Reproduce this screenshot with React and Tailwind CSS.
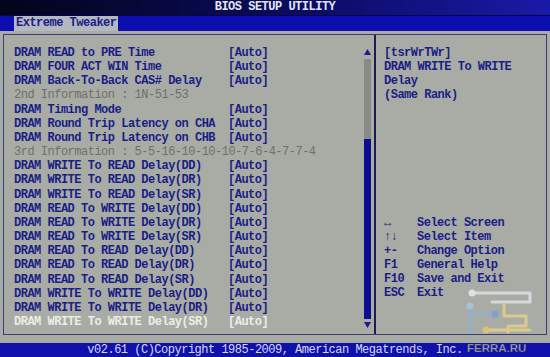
import React from 'react';

const rows = [
    { label: 'DRAM READ to PRE Time', value: '[Auto]' },
    { label: 'DRAM FOUR ACT WIN Time', value: '[Auto]' },
    { label: 'DRAM Back-To-Back CAS# Delay', value: '[Auto]' },
    { label: '2nd Information : 1N-51-53', info: true },
    { label: 'DRAM Timing Mode', value: '[Auto]' },
    { label: 'DRAM Round Trip Latency on CHA', value: '[Auto]' },
    { label: 'DRAM Round Trip Latency on CHB', value: '[Auto]' },
    { label: '3rd Information : 5-5-16-10-10-10-7-6-4-7-7-4', info: true },
    { label: 'DRAM WRITE To READ Delay(DD)', value: '[Auto]' },
    { label: 'DRAM WRITE To READ Delay(DR)', value: '[Auto]' },
    { label: 'DRAM WRITE To READ Delay(SR)', value: '[Auto]' },
    { label: 'DRAM READ To WRITE Delay(DD)', value: '[Auto]' },
    { label: 'DRAM READ To WRITE Delay(DR)', value: '[Auto]' },
    { label: 'DRAM READ To WRITE Delay(SR)', value: '[Auto]' },
    { label: 'DRAM READ To READ Delay(DD)', value: '[Auto]' },
    { label: 'DRAM READ To READ Delay(DR)', value: '[Auto]' },
    { label: 'DRAM READ To READ Delay(SR)', value: '[Auto]' },
    { label: 'DRAM WRITE To WRITE Delay(DD)', value: '[Auto]' },
    { label: 'DRAM WRITE To WRITE Delay(DR)', value: '[Auto]' },
    { label: 'DRAM WRITE To WRITE Delay(SR)', value: '[Auto]', selected: true },
];

const keys = [
    ['↔', 'Select Screen'],
    ['↑↓', 'Select Item'],
    ['+-', 'Change Option'],
    ['F1', 'General Help'],
    ['F10', 'Save and Exit'],
    ['ESC', 'Exit'],
];

export default function App() {
    return (
        <div
            className="w-[550px] h-[357px] bg-[#a8aca4] flex flex-col relative overflow-hidden font-bold text-[12px] tracking-[-0.5px] leading-[14.16px]"
            style={{ fontFamily: '"Liberation Mono", "DejaVu Sans Mono", monospace' }}
        >
            {/* title */}
            <div className="h-[15px] bg-gradient-to-r from-[#04041a] via-[#0a0a5c] to-[#1a1aa8] flex items-center justify-center text-[#e4e6ee]">
                BIOS SETUP UTILITY
            </div>
            {/* tabs */}
            <div className="h-[16px] bg-[#0c0eb0] border-t border-[#05054a] pl-[14px] flex">
                <div className="w-[104px] h-full bg-[#b4b8c0] text-[#1a1e86] pl-[2px] flex items-center">Extreme Tweaker</div>
            </div>

            {/* body */}
            <div className="flex-1 px-[3px] pt-[3px] pb-[8px]">
                <div className="h-full border border-[#3a3e78] flex">
                    {/* settings list */}
                    <div className="w-[370px] flex pl-[10px] pt-[11px]">
                        <div className="flex-1">
                            {rows.map((r) => (
                                <div key={r.label} className="flex whitespace-pre">
                                    <span
                                        className={
                                            r.info
                                                ? 'text-[#6c706c] font-normal'
                                                : r.selected
                                                ? 'w-[214px] text-[#eceee8]'
                                                : 'w-[214px] text-[#1a1e86]'
                                        }
                                    >
                                        {r.label}
                                    </span>
                                    {r.value && (
                                        <span className={r.selected ? 'text-[#eceee8]' : 'text-[#1a1e86]'}>{r.value}</span>
                                    )}
                                </div>
                            ))}
                        </div>
                        {/* scrollbar */}
                        <div className="w-[8px] mr-[3px] flex flex-col items-center pt-[3px] pb-[6px]">
                            <svg width="7" height="6" viewBox="0 0 7 6" className="shrink-0">
                                <path d="M3.5 0 L7 6 H0 Z" fill="#1a1e86" />
                            </svg>
                            <div className="w-[7px] flex-1 flex flex-col mt-[4px] mb-[3px]">
                                <div className="h-[80px] bg-[#888c88]" />
                                <div className="flex-1 bg-[#0c0e90]" />
                            </div>
                            <svg width="7" height="6" viewBox="0 0 7 6" className="shrink-0">
                                <path d="M0 0 H7 L3.5 6 Z" fill="#1a1e86" />
                            </svg>
                        </div>
                    </div>
                    {/* divider */}
                    <div className="w-[2px] bg-[#1a1e4e]" />
                    {/* help */}
                    <div className="flex-1 flex flex-col pl-[8px] pt-[11px] text-[#1a1e86]">
                        <div>[tsrWrTWr]</div>
                        <div>DRAM WRITE To WRITE</div>
                        <div>Delay</div>
                        <div>(Same Rank)</div>
                        <div className="mt-[113px]">
                            {keys.map(([k, d]) => (
                                <div key={k} className="flex whitespace-pre">
                                    <span className="w-[33px]">{k}</span>
                                    <span>{d}</span>
                                </div>
                            ))}
                        </div>
                    </div>
                </div>
            </div>

            {/* footer */}
            <div className="h-[14px] bg-[#1010ac] flex items-center justify-center text-[#d4daf2] font-normal">
                v02.61 (C)Copyright 1985-2009, American Megatrends, Inc.
            </div>

            {/* ferra.ru watermark */}
            <div className="absolute left-[464px] top-[286px] w-[80px] h-[68px] opacity-85">
                <svg width="76" height="57" viewBox="0 0 76 57" fill="none" strokeLinecap="round" strokeLinejoin="round">
                    <path d="M8 7 H66 V16 H28" stroke="#dfe2e6" strokeWidth="3" />
                    <circle cx="8" cy="7" r="3.5" fill="#e8eaee" />
                    <path d="M6 20 V46 M6 28 H30" stroke="#8fb0d8" strokeWidth="3" />
                    <circle cx="6" cy="20" r="3.5" fill="#a8c4e4" />
                    <circle cx="31" cy="28" r="3.5" fill="#7aa0d4" />
                    <path d="M40 18 V30 H62 V40 H44 V46 M22 44 H66" stroke="#e6d08a" strokeWidth="3" />
                    <circle cx="22" cy="44" r="3.5" fill="#e6c474" />
                </svg>
                <div
                    className="text-[11.5px] leading-[11px] text-[#c4c8d0] tracking-[0px] pl-[3px] font-bold"
                    style={{ fontFamily: '"Liberation Sans", Arial, sans-serif', WebkitTextStroke: '0.5px #3a3a4a' }}
                >
                    FERRA.RU
                </div>
            </div>
        </div>
    );
}
